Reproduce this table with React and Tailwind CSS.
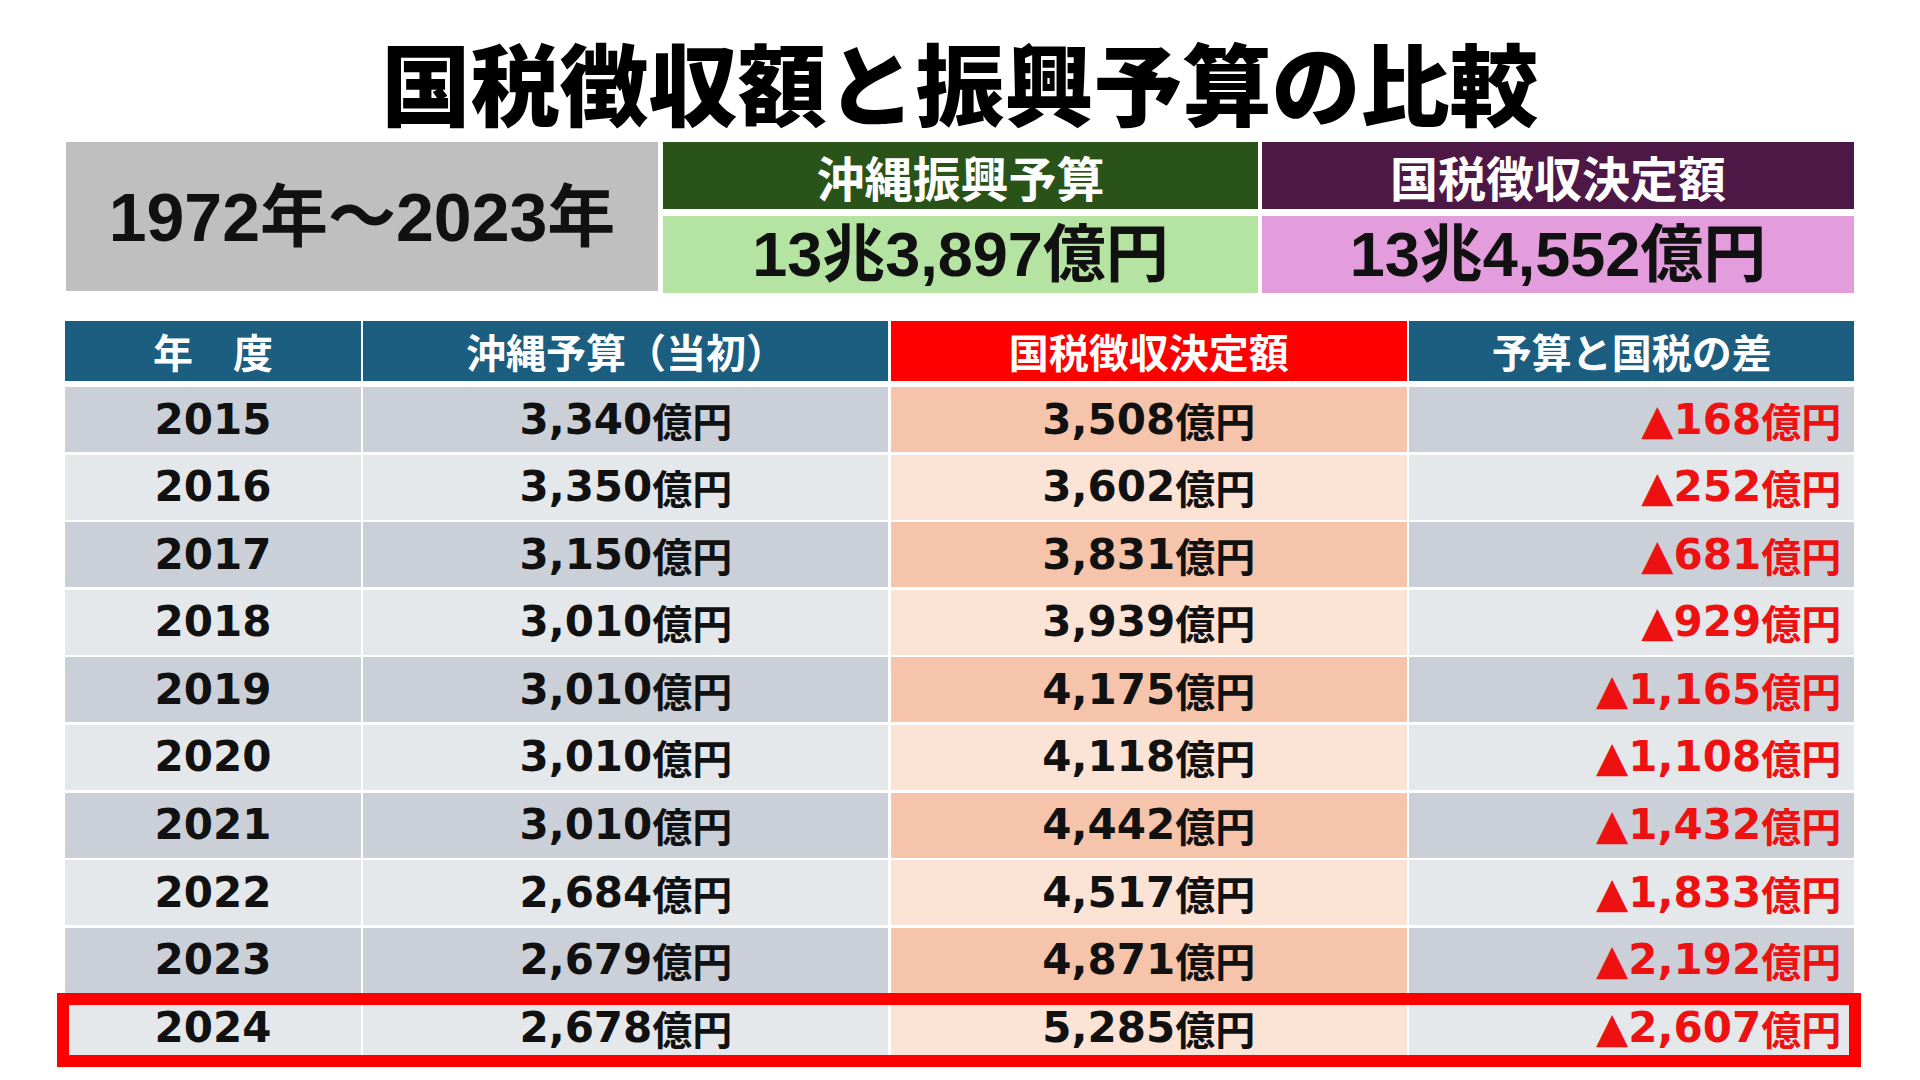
import React from 'react';

const jp = { fontFamily: '"Noto Sans CJK JP", sans-serif' };
const num = { fontFamily: '"DejaVu Sans", "Noto Sans CJK JP", sans-serif' };
const sum = { fontFamily: '"Liberation Sans", "Noto Sans CJK JP", sans-serif' };

const rows = [
  ['2015', '3,340', '3,508', '168'],
  ['2016', '3,350', '3,602', '252'],
  ['2017', '3,150', '3,831', '681'],
  ['2018', '3,010', '3,939', '929'],
  ['2019', '3,010', '4,175', '1,165'],
  ['2020', '3,010', '4,118', '1,108'],
  ['2021', '3,010', '4,442', '1,432'],
  ['2022', '2,684', '4,517', '1,833'],
  ['2023', '2,679', '4,871', '2,192'],
  ['2024', '2,678', '5,285', '2,607'],
];

const Unit = ({ children }) => (
  <>
    {children}
    <span style={jp} className="text-[40px] font-bold">億円</span>
  </>
);

const App = () => {
  return (
    <div className="relative w-[1920px] h-[1080px] bg-white overflow-hidden">
      {/* title */}
      <div className="h-[142px] flex items-start justify-center pt-[36px]">
        <h1 style={jp} className="text-[89px] font-black leading-[90px] h-[90px] text-black">
          国税徴収額と振興予算の比較
        </h1>
      </div>

      {/* summary */}
      <div className="flex px-[66px] h-[151px]">
        <div className="w-[592px] h-[149px] bg-[#bfbfbf] flex items-center justify-center">
          <span style={sum} className="text-[68px] font-semibold text-[#111] leading-none">1972年〜2023年</span>
        </div>
        <div className="w-[595px] ml-[5px] flex flex-col">
          <div className="h-[67px] bg-[#2a5319] flex items-center justify-center">
            <span style={jp} className="text-[48px] font-bold text-white leading-none">沖縄振興予算</span>
          </div>
          <div className="h-[77px] mt-[7px] bg-[#b4e3a2] flex items-center justify-center">
            <span style={sum} className="text-[63px] font-semibold text-[#111] leading-none">13兆3,897億円</span>
          </div>
        </div>
        <div className="w-[592px] ml-[4px] flex flex-col">
          <div className="h-[67px] bg-[#4e1846] flex items-center justify-center">
            <span style={jp} className="text-[48px] font-bold text-white leading-none">国税徴収決定額</span>
          </div>
          <div className="h-[77px] mt-[7px] bg-[#e39cdc] flex items-center justify-center">
            <span style={sum} className="text-[63px] font-semibold text-[#111] leading-none">13兆4,552億円</span>
          </div>
        </div>
      </div>

      {/* table */}
      <div className="px-[65px] mt-[28px]">
        <div className="grid grid-cols-[296px_525px_516px_445px] gap-x-[2.4px] h-[60px]">
          <div className="bg-[#1b5e80] flex items-center justify-center">
            <span style={jp} className="text-[40px] font-bold text-white leading-none">年　度</span>
          </div>
          <div className="bg-[#1b5e80] flex items-center justify-center">
            <span style={jp} className="text-[40px] font-bold text-white leading-none">沖縄予算（当初）</span>
          </div>
          <div className="bg-[#ff0000] flex items-center justify-center">
            <span style={jp} className="text-[40px] font-bold text-white leading-none">国税徴収決定額</span>
          </div>
          <div className="bg-[#1b5e80] flex items-center justify-center">
            <span style={jp} className="text-[40px] font-bold text-white leading-none">予算と国税の差</span>
          </div>
        </div>

        <div className="mt-[6px] flex flex-col gap-y-[2.6px]">
          {rows.map(([year, budget, tax, diff], i) => {
            const dark = i % 2 === 0;
            const gray = dark ? 'bg-[#cbd0d8]' : 'bg-[#e5e8eb]';
            const peach = dark ? 'bg-[#f5c4aa]' : 'bg-[#fbe3d6]';
            return (
              <div
                key={year}
                style={num}
                className="grid grid-cols-[296px_525px_516px_445px] gap-x-[2.4px] h-[65px] text-[42px] font-bold leading-none"
              >
                <div className={`${gray} flex items-center justify-center text-[#111]`}>{year}</div>
                <div className={`${gray} flex items-center justify-center text-[#111]`}>
                  <Unit>{budget}</Unit>
                </div>
                <div className={`${peach} flex items-center justify-center text-[#111]`}>
                  <Unit>{tax}</Unit>
                </div>
                <div className={`${gray} flex items-center justify-end pr-[13px] text-[#ee1111]`}>
                  <Unit>▲{diff}</Unit>
                </div>
              </div>
            );
          })}
        </div>
      </div>

      {/* highlight for latest year */}
      <div className="absolute left-[57px] top-[993px] w-[1804px] h-[74px] border-[12px] border-[#ff0000]" />
    </div>
  );
};

export default App;
